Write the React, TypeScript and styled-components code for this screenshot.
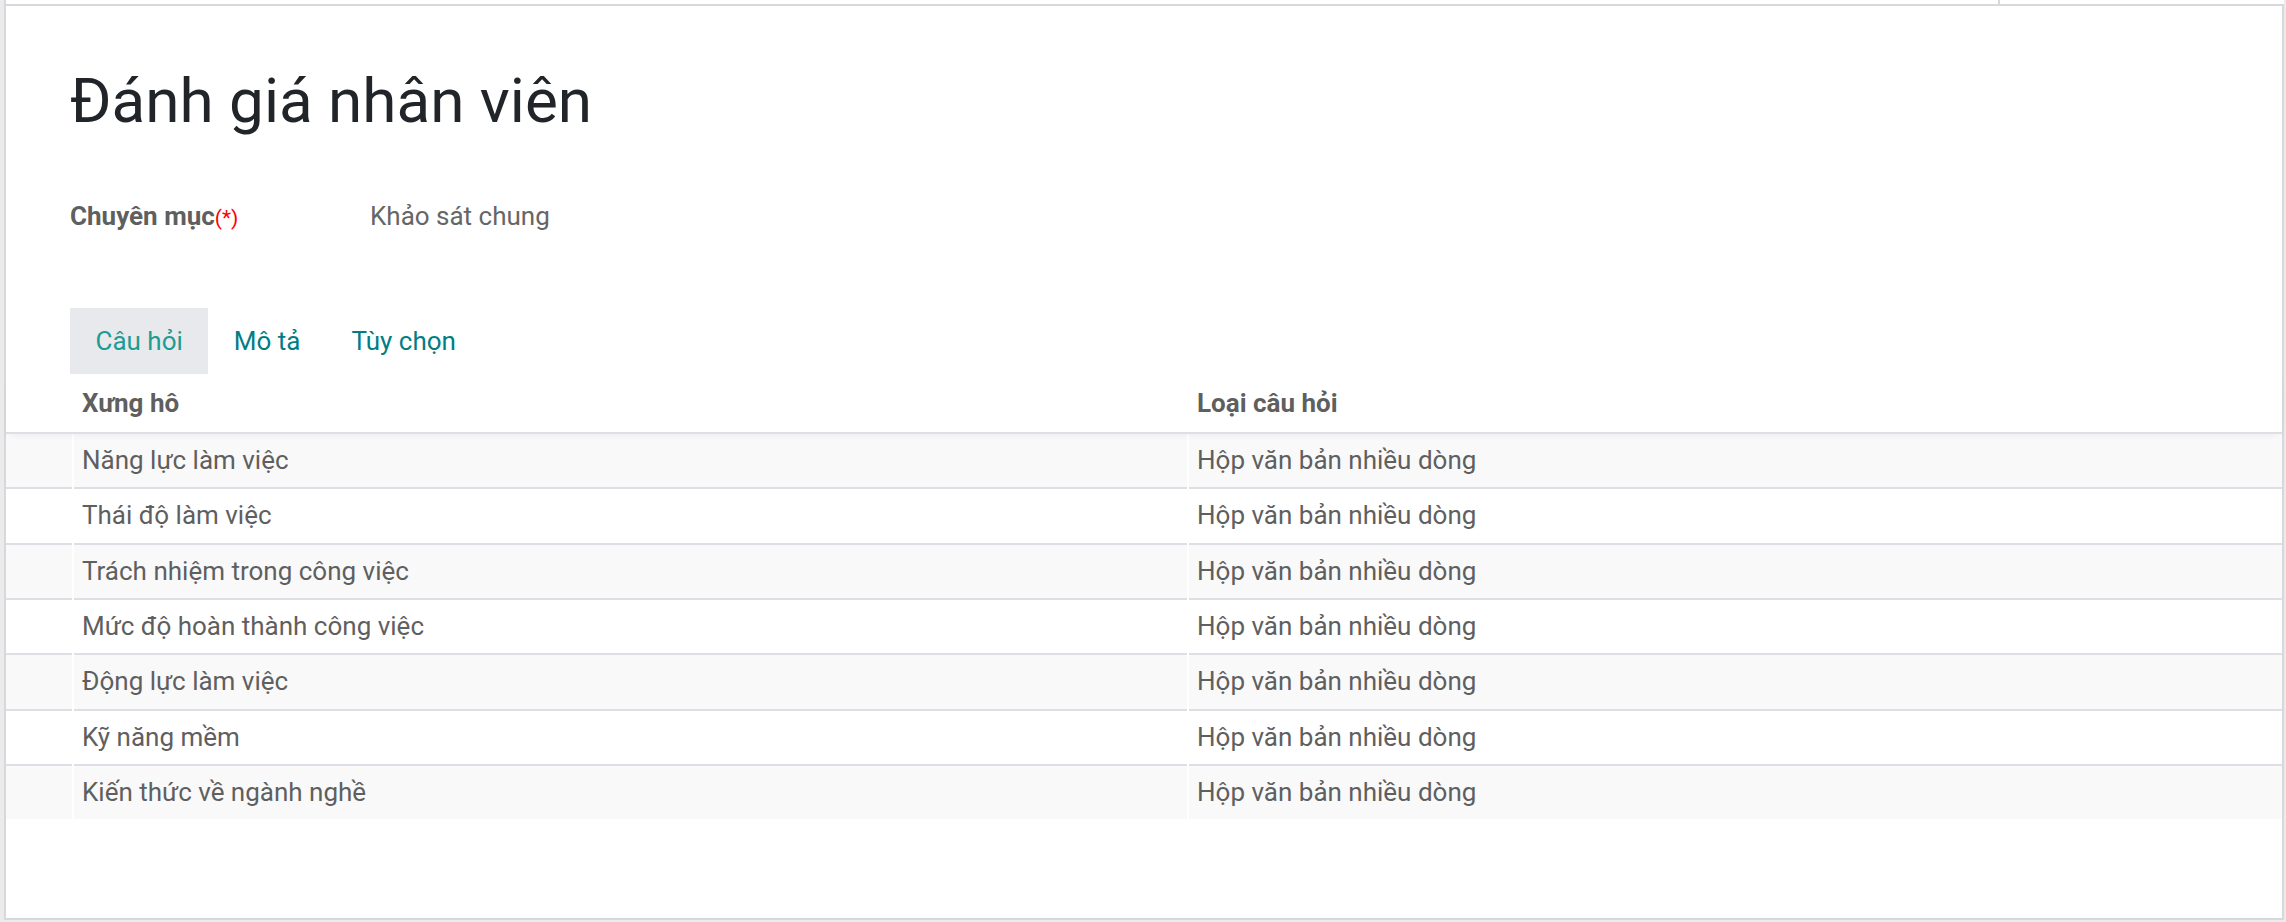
import React, { useState } from "react";
import styled, { createGlobalStyle } from "styled-components";

const GlobalStyle = createGlobalStyle`
  html, body {
    margin: 0;
    padding: 0;
    background: #ffffff;
  }
  body {
    font-family: Roboto, "Liberation Sans", sans-serif;
    -webkit-font-smoothing: antialiased;
  }
`;

interface active {
  active: boolean
}

interface striped {
  striped: boolean
  first: boolean
}

const Page = styled.div`
  display: flex;
  width: 2286px;
  height: 922px;
  background: #ebebec;
`;

const Gutter = styled.div`
  width: 4px;
  flex-shrink: 0;
`;

const Main = styled.div`
  flex: 1;
  display: flex;
  flex-direction: column;
  margin-right: 2px;
  margin-bottom: 2px;
`;

const TopStrip = styled.div`
  height: 4px;
  display: flex;
  background: #ffffff;
  border-left: 2px solid #d6d8dc;
`;

const StripCell = styled.div`
  flex: 1;
  border-right: 2px solid #d6d8dc;
`;

const StripRest = styled.div`
  width: 284px;
`;

const Sheet = styled.div`
  flex: 1;
  background: #ffffff;
  border: 2px solid #d6d8dc;
  display: flex;
  flex-direction: column;
`;

const Head = styled.div`
  padding: 57px 64px 0;
`;

const Title = styled.h1`
  margin: 0;
  font-size: 62px;
  font-weight: 400;
  line-height: 75px;
  color: #212529;
`;

const Field = styled.div`
  display: flex;
  margin-top: 59px;
  font-size: 26px;
  line-height: 39px;
`;

const Label = styled.div`
  width: 300px;
  font-weight: 700;
  color: #5f5f5f;
`;

const Required = styled.span`
  color: #ff0000;
  font-weight: 400;
  font-size: 21px;
`;

const Value = styled.div`
  color: #666666;
`;

const Tabs = styled.div`
  display: flex;
  margin-top: 70px;
`;

const Tab = styled.div<active>`
  padding: 14px 25.5px 13px;
  font-size: 26px;
  line-height: 39px;
  color: ${(p) => (p.active ? "#1e9b92" : "#017e84")};
  background: ${(p) => (p.active ? "#e7e9ed" : "transparent")};
  cursor: pointer;
`;

const Table = styled.div`
  display: flex;
  flex-direction: column;
`;

const HeaderRow = styled.div`
  position: relative;
  z-index: 1;
  display: grid;
  grid-template-columns: 66px 1113px 1fr;
  column-gap: 2px;
  height: 58px;
  align-items: center;
  border-bottom: 2px solid #dcdfe3;
  box-shadow: 0 4px 8px -3px rgba(0, 0, 0, 0.06);
`;

const HeaderCell = styled.div`
  padding-left: 8px;
  font-size: 26px;
  line-height: 39px;
  font-weight: 700;
  color: #5f5f5f;
`;

const Row = styled.div`
  display: grid;
  grid-template-columns: 66px 1113px 1fr;
  column-gap: 2px;
  background: #ffffff;
`;

const Cell = styled.div<striped>`
  height: 53.33px;
  display: flex;
  align-items: center;
  padding-left: 8px;
  font-size: 26px;
  line-height: 39px;
  color: #5f5f5f;
  background: ${(p) => (p.striped ? "#f9f9fa" : "#ffffff")};
  border-top: ${(p) => (p.first ? "0" : "2px solid #dcdfe3")};
`;

const questions = [
  "Năng lực làm việc",
  "Thái độ làm việc",
  "Trách nhiệm trong công việc",
  "Mức độ hoàn thành công việc",
  "Động lực làm việc",
  "Kỹ năng mềm",
  "Kiến thức về ngành nghề",
];

const tabs = ["Câu hỏi", "Mô tả", "Tùy chọn"];

const App: React.FC = () => {
  const [tab, setTab] = useState(0);

  return (
    <>
      <GlobalStyle />
      <Page>
        <Gutter />
        <Main>
          <TopStrip>
            <StripCell />
            <StripRest />
          </TopStrip>
          <Sheet>
            <Head>
              <Title>Đánh giá nhân viên</Title>
              <Field>
                <Label>
                  Chuyên mục<Required>(*)</Required>
                </Label>
                <Value>Khảo sát chung</Value>
              </Field>
              <Tabs>
                {tabs.map((t, i) => (
                  <Tab key={t} active={i === tab} onClick={() => setTab(i)}>
                    {t}
                  </Tab>
                ))}
              </Tabs>
            </Head>
            <Table>
              <HeaderRow>
                <HeaderCell />
                <HeaderCell>Xưng hô</HeaderCell>
                <HeaderCell>Loại câu hỏi</HeaderCell>
              </HeaderRow>
              {questions.map((q, i) => (
                <Row key={q}>
                  <Cell striped={i % 2 === 0} first={i === 0} />
                  <Cell striped={i % 2 === 0} first={i === 0}>{q}</Cell>
                  <Cell striped={i % 2 === 0} first={i === 0}>Hộp văn bản nhiều dòng</Cell>
                </Row>
              ))}
            </Table>
          </Sheet>
        </Main>
      </Page>
    </>
  );
};

export default App;
